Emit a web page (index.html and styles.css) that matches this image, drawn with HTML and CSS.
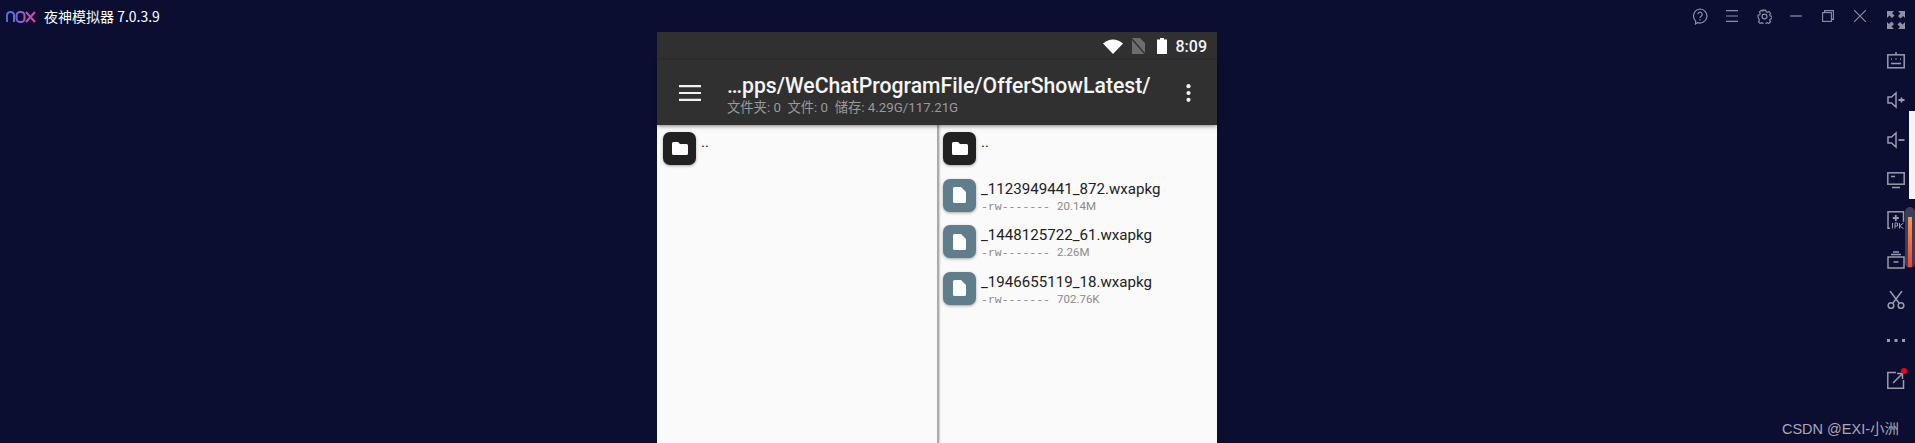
FILE: index.html
```html
<!DOCTYPE html>
<html lang="en">
<head>
    <meta charset="UTF-8">
    <meta name="viewport" content="width=device-width, initial-scale=1.0">
    <title>夜神模拟器</title>
    <link rel="stylesheet" href="styles.css">
</head>
<body>
    <header class="titlebar">
        <svg class="nox-logo" width="30" height="12" viewBox="0 0 30 12" fill="none" stroke-width="2">
            <defs>
                <linearGradient id="noxGrad" x1="0" x2="30" y1="0" y2="0" gradientUnits="userSpaceOnUse">
                    <stop offset="0" stop-color="#3f6fe8"/>
                    <stop offset="0.5" stop-color="#8a63cf"/>
                    <stop offset="1" stop-color="#ea3f9e"/>
                </linearGradient>
            </defs>
            <path d="M1 11V4.5Q1 1 4.5 1T8 4.5V11" stroke="url(#noxGrad)"/>
            <rect x="10.5" y="1" width="8" height="10" rx="3.5" stroke="url(#noxGrad)"/>
            <path d="M20 1l9 10M29 1l-9 10" stroke="url(#noxGrad)"/>
        </svg>
        <span class="app-name">夜神模拟器 7.0.3.9</span>
        <div class="window-btns">
            <span class="win-btn">
                <svg width="16" height="17" viewBox="0 0 16 17" fill="none" stroke="#8f90a2" stroke-width="1.2">
                    <path d="M8 1a7 7 0 1 1-2.400 13.600L3.500 16l.2-3A7 7 0 0 1 8 1z"/>
                    <path d="M5.800 6.300a2.200 2.200 0 1 1 3.400 1.900c-.8.500-1.200 1-1.200 1.800M8 11.300v1.300"/>
                </svg>
            </span>
            <span class="win-btn">
                <svg width="12" height="12" viewBox="0 0 12 12" fill="none" stroke="#8f90a2" stroke-width="1.1">
                    <path d="M0 .6h12M0 6h12M0 11.400h12"/>
                </svg>
            </span>
            <span class="win-btn">
                <svg width="15" height="15" viewBox="0 0 16 16" fill="none" stroke="#8f90a2" stroke-width="1.300">
                    <path d="M6.600 1h2.800l.4 1.900 1.500.6 1.600-1 2 2-1 1.600.6 1.500 1.900.4v2.800l-1.900.4-.6 1.500 1 1.600-2 2-1.600-1-1.500.6-.4 1.900H6.600l-.4-1.900-1.500-.6-1.600 1-2-2 1-1.600-.6-1.500L.6 9.400V6.600l1.900-.4.6-1.500-1-1.600 2-2 1.600 1 1.500-.6z" transform="translate(.6 .3) scale(.93)"/>
                    <circle cx="8" cy="8" r="2.600"/>
                </svg>
            </span>
            <span class="win-btn">
                <svg width="12" height="12" viewBox="0 0 12 12" fill="none" stroke="#8f90a2" stroke-width="1.200">
                    <path d="M0 6h12"/>
                </svg>
            </span>
            <span class="win-btn">
                <svg width="12" height="12" viewBox="0 0 12 12" fill="none" stroke="#8f90a2" stroke-width="1.100">
                    <rect x=".6" y="2.600" width="8.800" height="8.800"/>
                    <path d="M2.600 2.600V.6h8.800v8.800H9.400"/>
                </svg>
            </span>
            <span class="win-btn">
                <svg width="12" height="12" viewBox="0 0 12 12" fill="none" stroke="#8f90a2" stroke-width="1.100">
                    <path d="M0 0l12 12M12 0L0 12"/>
                </svg>
            </span>
            <span class="win-btn fullscreen-btn">
                <svg width="18" height="18" viewBox="0 0 18 18" fill="#8f90a2">
                    <path d="M0 0h7L5 2l2.500 2.500-2.500 2.500L2.500 4.500 0 7zM18 0v7l-2-2-2.500 2.500L11 5l2.500-2.500L11 0zM0 18v-7l2 2 2.500-2.500L7 13l-2.500 2.500L7 18zM18 18h-7l2-2-2.500-2.500L13 11l2.500 2.500L18 11z"/>
                </svg>
            </span>
        </div>
    </header>

    <div class="main">
        <div class="screen-area">
            <div class="phone">
                <div class="statusbar">
                    <svg width="20" height="15" viewBox="0 0 20 15" fill="#fff"><path d="M0 4.500Q10-3.500 20 4.500L10 15z"/></svg>
                    <svg class="sim-icon" width="13" height="16" viewBox="0 0 13 16"><path d="M0 0h8l5 5v11H0z" fill="#6d6d6d"/><path d="M0 1l13 15" stroke="#303030" stroke-width="1.400"/></svg>
                    <svg width="10" height="16" viewBox="0 0 10 16" fill="#fff"><path d="M3 0h4v1.500h3V16H0V1.500h3z"/></svg>
                    <span class="clock">8:09</span>
                </div>
                <div class="toolbar">
                    <svg class="menu-icon" width="22" height="16" viewBox="0 0 22 16" fill="#f2f2f2"><path d="M0 0h22v2.200H0zM0 6.900h22v2.200H0zM0 13.800h22V16H0z"/></svg>
                    <div class="path-info">
                        <div class="path-title">…pps/WeChatProgramFile/OfferShowLatest/</div>
                        <div class="path-sub">文件夹: 0&nbsp; 文件: 0&nbsp; 储存: 4.29G/117.21G</div>
                    </div>
                    <svg class="more-icon" width="5" height="18" viewBox="0 0 5 18" fill="#f2f2f2">
                        <circle cx="2.500" cy="2.200" r="2.100"/><circle cx="2.500" cy="9" r="2.100"/><circle cx="2.500" cy="15.800" r="2.100"/>
                    </svg>
                </div>
                <div class="panes">
                    <div class="pane left-pane">
                        <div class="file-row">
                            <div class="file-icon folder">
                                <svg width="16" height="13" viewBox="0 0 16 13" fill="#fff"><path d="M1.500 0h4.500l2 2h6.500A1.500 1.500 0 0 1 16 3.500v8a1.500 1.500 0 0 1-1.500 1.500h-13A1.500 1.500 0 0 1 0 11.500v-10A1.500 1.500 0 0 1 1.500 0z"/></svg>
                            </div>
                            <div class="file-name">..</div>
                        </div>
                    </div>
                    <div class="pane-divider"></div>
                    <div class="pane right-pane">
                        <div class="file-row">
                            <div class="file-icon folder">
                                <svg width="16" height="13" viewBox="0 0 16 13" fill="#fff"><path d="M1.500 0h4.500l2 2h6.500A1.500 1.500 0 0 1 16 3.500v8a1.500 1.500 0 0 1-1.500 1.500h-13A1.500 1.500 0 0 1 0 11.500v-10A1.500 1.500 0 0 1 1.500 0z"/></svg>
                            </div>
                            <div class="file-name">..</div>
                        </div>
                        <div class="file-row">
                            <div class="file-icon doc">
                                <svg width="13" height="16" viewBox="0 0 13 16" fill="#fff"><path d="M1.500 0H8l5 5v9.500a1.500 1.500 0 0 1-1.500 1.500h-10A1.500 1.500 0 0 1 0 14.500v-13A1.500 1.500 0 0 1 1.500 0z"/></svg>
                            </div>
                            <div>
                                <div class="file-name">_1123949441_872.wxapkg</div>
                                <div class="file-meta"><span class="perms">-rw-------</span><span>20.14M</span></div>
                            </div>
                        </div>
                        <div class="file-row">
                            <div class="file-icon doc">
                                <svg width="13" height="16" viewBox="0 0 13 16" fill="#fff"><path d="M1.500 0H8l5 5v9.500a1.500 1.500 0 0 1-1.500 1.500h-10A1.500 1.500 0 0 1 0 14.500v-13A1.500 1.500 0 0 1 1.500 0z"/></svg>
                            </div>
                            <div>
                                <div class="file-name">_1448125722_61.wxapkg</div>
                                <div class="file-meta"><span class="perms">-rw-------</span><span>2.26M</span></div>
                            </div>
                        </div>
                        <div class="file-row">
                            <div class="file-icon doc">
                                <svg width="13" height="16" viewBox="0 0 13 16" fill="#fff"><path d="M1.500 0H8l5 5v9.500a1.500 1.500 0 0 1-1.500 1.500h-10A1.500 1.500 0 0 1 0 14.500v-13A1.500 1.500 0 0 1 1.500 0z"/></svg>
                            </div>
                            <div>
                                <div class="file-name">_1946655119_18.wxapkg</div>
                                <div class="file-meta"><span class="perms">-rw-------</span><span>702.76K</span></div>
                            </div>
                        </div>
                    </div>
                </div>
            </div>
        </div>

        <aside class="sidebar">
            <svg width="18" height="18" viewBox="0 0 18 18" fill="none" stroke="#9a9bab" stroke-width="1.500">
                <rect x=".8" y="3.800" width="16.400" height="13"/>
                <path d="M9 3.500V1M4 8h1M8.500 8h1M13 8h1M4 12.500h10"/>
            </svg>
            <svg width="18" height="18" viewBox="0 0 18 18" fill="none" stroke="#9a9bab" stroke-width="1.500">
                <path d="M1 6h3.500L9 2v14l-4.500-4H1z"/>
                <path d="M11.500 9h6M14.500 6.500v5" stroke-width="1.800"/>
            </svg>
            <svg width="18" height="18" viewBox="0 0 18 18" fill="none" stroke="#9a9bab" stroke-width="1.500">
                <path d="M1 6h3.500L9 2v14l-4.500-4H1z"/>
                <path d="M11.500 9h6" stroke-width="1.800"/>
            </svg>
            <svg width="18" height="18" viewBox="0 0 18 18" fill="none" stroke="#9a9bab" stroke-width="1.500">
                <rect x=".8" y="1.800" width="16.400" height="11.400"/>
                <path d="M4 5.500h4M5 16.500h8"/>
            </svg>
            <svg width="18" height="18" viewBox="0 0 18 18" fill="none" stroke="#9a9bab" stroke-width="1.500">
                <path d="M3 17.200H1V.8h15.500v10"/>
                <path d="M8.800 4v6M5.800 7h6" stroke-width="1.800"/>
                <path d="M5.500 17.500V12M8 17.500V12h2.500v3H8M12.500 12v5.500M16.500 12l-4 3 4 2.500" stroke-width="1"/>
            </svg>
            <svg width="18" height="18" viewBox="0 0 18 18" fill="none" stroke="#9a9bab" stroke-width="1.500">
                <rect x="1" y="6" width="16" height="11"/>
                <path d="M4 3.500h10M6 1h6M6.500 11h5"/>
            </svg>
            <svg width="18" height="18" viewBox="0 0 18 18" fill="none" stroke="#9a9bab" stroke-width="1.500">
                <path d="M3 0l9 12M15 0L6 12"/>
                <circle cx="4" cy="14.500" r="2.800"/><circle cx="14" cy="14.500" r="2.800"/>
            </svg>
            <svg width="18" height="18" viewBox="0 0 18 18" fill="#9a9bab">
                <rect x="0" y="8" width="3" height="3"/><rect x="7.500" y="8" width="3" height="3"/><rect x="15" y="8" width="3" height="3"/>
            </svg>
            <span class="share-btn">
                <svg width="18" height="18" viewBox="0 0 18 18" fill="none" stroke="#9a9bab" stroke-width="1.500">
                    <path d="M9 1.500H.8v15.700h15.700V9"/>
                    <path d="M6 12L15 3M10 2.500h5.500V8"/>
                </svg>
                <span class="red-dot"></span>
            </span>
        </aside>
    </div>

    <div class="edge-strip"></div>
    <div class="edge-slider"><div class="edge-slider-fill"></div></div>
    <div class="watermark">CSDN @EXI-小洲</div>
</body>
</html>
```

FILE: styles.css
```css
html, body {
    height: 100%;
}
body {
    margin: 0;
    background-color: #0b0e30;
    overflow: hidden;
    font-family: Roboto, "Noto Sans CJK SC", sans-serif;
    display: flex;
    flex-direction: column;
}
svg {
    display: block;
    flex-shrink: 0;
}
.titlebar {
    height: 32px;
    display: flex;
    align-items: center;
    padding-left: 6px;
    flex-shrink: 0;
}
.nox-logo {
    margin-top: 1px;
}
.app-name {
    margin-left: 8px;
    color: #fff;
    font-size: 14px;
    font-family: "Noto Sans CJK SC", sans-serif;
}
.window-btns {
    margin-left: auto;
    display: flex;
    align-items: center;
}
.win-btn {
    width: 32px;
    display: flex;
    justify-content: center;
}
.fullscreen-btn {
    width: 39px;
    margin-top: 8px;
}
.main {
    flex: 1;
    display: flex;
    min-height: 0;
}
.screen-area {
    flex: 1;
    display: flex;
    justify-content: center;
    min-width: 0;
}
.phone {
    width: 560px;
    background-color: #fafafa;
    display: flex;
    flex-direction: column;
}
.statusbar {
    height: 28px;
    background-color: #303030;
    display: flex;
    align-items: center;
    padding-right: 10px;
    justify-content: flex-end;
    gap: 9px;
    flex-shrink: 0;
}
.sim-icon {
    margin-right: 3px;
}
.statusbar .clock {
    color: #f4f4f4;
    font-size: 16px;
    font-weight: 500;
}
.toolbar {
    height: 65px;
    background-color: #303030;
    display: flex;
    align-items: center;
    padding: 0 26px 0 22px;
    box-shadow: 0 1px 4px rgba(0,0,0,0.5);
    position: relative;
    z-index: 1;
    flex-shrink: 0;
}
.path-info {
    margin: 3px 0 0 26px;
    flex: 1;
    min-width: 0;
}
.path-title {
    color: #f5f5f5;
    font-size: 21.200px;
    font-weight: 500;
    line-height: 26px;
    white-space: nowrap;
}
.path-sub {
    color: #9a9a9a;
    font-size: 13.300px;
    line-height: 17px;
    white-space: nowrap;
}
.panes {
    flex: 1;
    display: flex;
    min-height: 0;
}
.pane {
    padding: 7px 0 0 6px;
    min-width: 0;
    box-sizing: border-box;
}
.left-pane {
    flex: 0 0 280px;
}
.right-pane {
    flex: 1;
    padding-left: 4px;
}
.pane-divider {
    width: 2px;
    background-color: #aaa;
    box-shadow: 1px 0 2px rgba(0,0,0,0.2);
}
.file-row {
    display: flex;
    height: 46.500px;
    gap: 5px;
}
.file-icon {
    width: 33px;
    height: 33px;
    border-radius: 7px;
    display: flex;
    align-items: center;
    justify-content: center;
    box-shadow: 0 1px 3px rgba(0,0,0,0.35);
}
.file-icon.folder {
    background-color: #212121;
}
.file-icon.doc {
    background-color: #607d8b;
}
.file-name {
    color: #212121;
    font-size: 15.100px;
    line-height: 20px;
    white-space: nowrap;
}
.file-meta {
    color: #8a8a8a;
    font-size: 11.500px;
    line-height: 15px;
    white-space: nowrap;
    display: flex;
}
.perms {
    width: 76px;
    font-family: "Liberation Mono", monospace;
}
.sidebar {
    width: 41px;
    display: flex;
    flex-direction: column;
    align-items: flex-start;
    padding: 19px 0 0 13px;
    gap: 22px;
    box-sizing: border-box;
    flex-shrink: 0;
}
.share-btn {
    position: relative;
    display: block;
}
.red-dot {
    position: absolute;
    right: -2px;
    top: -3px;
    width: 6px;
    height: 6px;
    background-color: #f5000f;
    border-radius: 50%;
}
.edge-strip {
    position: absolute;
    right: 0;
    top: 111px;
    width: 6px;
    height: 88px;
    background-color: #f5f5f5;
}
.edge-slider {
    position: absolute;
    right: 0;
    top: 207px;
    width: 10px;
    height: 61px;
    background-color: #3c3e56;
    border-radius: 5px;
    display: flex;
    justify-content: center;
    padding-top: 10px;
    box-sizing: border-box;
}
.edge-slider-fill {
    width: 4px;
    height: 50px;
    background: linear-gradient(#f59a55, #e8433f);
}
.watermark {
    position: absolute;
    right: 16px;
    top: 417px;
    color: #a8a9b4;
    font-size: 14.500px;
    font-family: "Liberation Sans", "Noto Sans CJK SC", sans-serif;
}
```
